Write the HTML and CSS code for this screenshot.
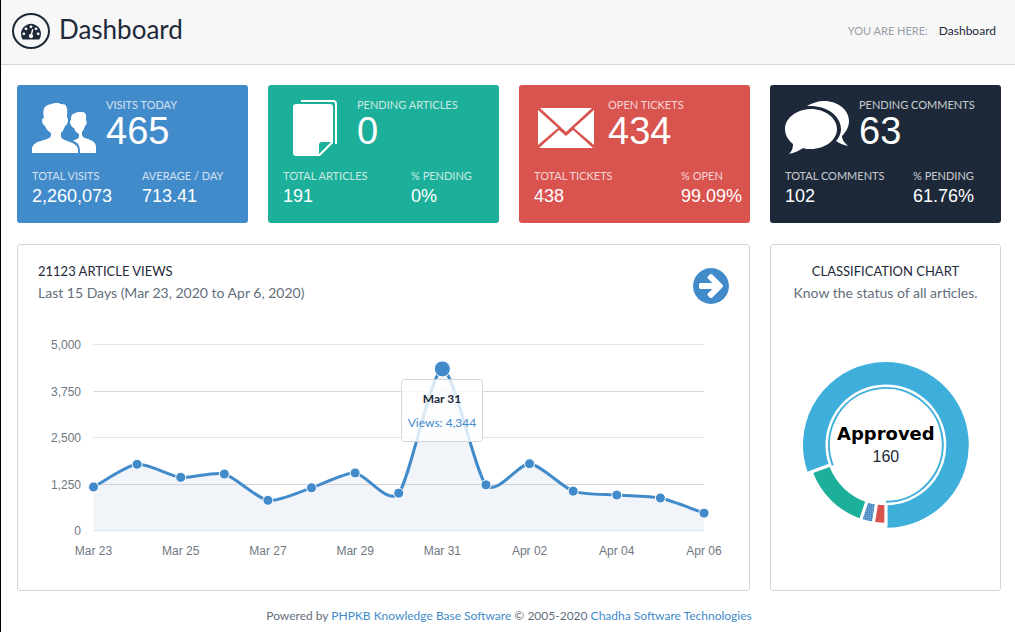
FILE: index.html
```html
<!DOCTYPE html>
<html lang="en">
<head>
  <meta charset="UTF-8" />
  <meta name="viewport" content="width=device-width, initial-scale=1.0" />
  <title>Dashboard</title>
  <link rel="stylesheet" href="styles.css">
</head>
<body>
  <header class="page-header">
    <h1>
      <span class="title-icon">
        <svg viewBox="0 0 1792 1792" aria-hidden="true"><path d="M384 1152q0-53-37.5-90.5t-90.5-37.5-90.5 37.5-37.5 90.5 37.5 90.5 90.5 37.5 90.5-37.5 37.5-90.5zm192-448q0-53-37.5-90.5t-90.5-37.5-90.5 37.5-37.5 90.5 37.5 90.5 90.5 37.5 90.5-37.5 37.5-90.5zm428 481l101-382q6-26-7.5-48.5t-38.5-29.5-48 6.5-30 39.5l-101 382q-60 5-107 43.5t-63 98.5q-20 77 20 146t117 89 146-20 89-117q16-60-6-117t-72-91zm660-33q0-53-37.5-90.5t-90.5-37.5-90.5 37.5-37.5 90.5 37.5 90.5 90.5 37.5 90.5-37.5 37.5-90.5zm-640-640q0-53-37.5-90.5t-90.5-37.5-90.5 37.5-37.5 90.5 37.5 90.5 90.5 37.5 90.5-37.5 37.5-90.5zm448 192q0-53-37.5-90.5t-90.5-37.5-90.5 37.5-37.5 90.5 37.5 90.5 90.5 37.5 90.5-37.5 37.5-90.5zm320 448q0 261-141 483-19 29-54 29h-1402q-35 0-54-29-141-221-141-483 0-182 71-348t191-286 286-191 348-71 348 71 286 191 191 286 71 348z"/></svg>
      </span>
      <span>Dashboard</span>
    </h1>
    <div class="breadcrumb">
      <span class="breadcrumb-label">You are here:</span>
      <span>Dashboard</span>
    </div>
  </header>

  <main class="dashboard">
    <section class="stat stat-visits">
      <div class="stat-main">
        <svg class="stat-icon" viewBox="0 0 64 60" aria-hidden="true">
          <path d="M0 55v-4c0-4 4-7 9-8 6-2 10-3 10-6v-2c-3-2-5-4-6-7-2-1-3-4-3-6 0-1 1-2 2-2-1-5-1-10 2-12 3-2 6-2 9-3h4c1 2 6 0 7 3 2 3 1 7 1 12 1 0 1 1 1 2 0 2-1 5-3 6-1 3-2 5-4 7v3c0 3 4 4 9 6s8 4 8 8v3z"/>
          <path d="M48 55c0-7-1-10-7-12 3-2 6-2 6-5v-2c-3-2-4-3-5-6-3-1-4-5-4-6 0-1 0-1 1-2 0-3 0-5 2-6 2-1 3-1 5-2h4c3 0 4 2 4 4v4c1 1 1 5-1 6-1 3-2 5-3 6v2c0 3 2 4 6 5 5 2 8 4 8 8v6z"/>
        </svg>
        <div>
          <h2>Visits Today</h2>
          <p class="stat-value">465</p>
        </div>
      </div>
      <dl class="stat-totals">
        <div><dt>Total Visits</dt><dd>2,260,073</dd></div>
        <div><dt>Average / Day</dt><dd>713.41</dd></div>
      </dl>
    </section>

    <section class="stat stat-articles">
      <div class="stat-main">
        <svg class="stat-icon" viewBox="0 0 64 60" aria-hidden="true">
          <path class="line" d="M18 3h32q3 0 3 3v40"/>
          <path fill-rule="evenodd" d="M13 6h34q3 0 3 3v36L37 58H13q-3 0-3-3V9q0-3 3-3zM36 56l12-12H39q-3 0-3 3z"/>
        </svg>
        <div>
          <h2>Pending Articles</h2>
          <p class="stat-value">0</p>
        </div>
      </div>
      <dl class="stat-totals">
        <div><dt>Total Articles</dt><dd>191</dd></div>
        <div><dt>% Pending</dt><dd>0%</dd></div>
      </dl>
    </section>

    <section class="stat stat-tickets">
      <div class="stat-main">
        <svg class="stat-icon" viewBox="0 0 64 60" aria-hidden="true">
          <path d="M6 10h52L32 34z"/>
          <path d="M4 12v35l20-17z"/>
          <path d="M60 12v35L40 30z"/>
          <path d="M5 50l20-18 7 6 7-6 20 18z"/>
        </svg>
        <div>
          <h2>Open Tickets</h2>
          <p class="stat-value">434</p>
        </div>
      </div>
      <dl class="stat-totals">
        <div><dt>Total Tickets</dt><dd>438</dd></div>
        <div><dt>% Open</dt><dd>99.09%</dd></div>
      </dl>
    </section>

    <section class="stat stat-comments">
      <div class="stat-main">
        <svg class="stat-icon" viewBox="0 0 64 60" aria-hidden="true">
          <path d="M26 11c14 0 26 9 26 20S40 51 26 51c-3 0-6 0-8-1-4 3-9 5-14 6 3-3 4-6 4-10-5-4-8-9-8-15 0-11 12-20 26-20z"/>
          <path d="M22 8c5-3 11-5 17-5 14 0 25 9 25 20 0 6-3 11-7 15 0 4 3 7 6 10-5-1-9-3-12-5 3-3 5-8 5-12C56 18 42 7 22 8z"/>
        </svg>
        <div>
          <h2>Pending Comments</h2>
          <p class="stat-value">63</p>
        </div>
      </div>
      <dl class="stat-totals">
        <div><dt>Total Comments</dt><dd>102</dd></div>
        <div><dt>% Pending</dt><dd>61.76%</dd></div>
      </dl>
    </section>

    <section class="panel panel-views">
      <div class="panel-head">
        <div>
          <h3>21123 Article Views</h3>
          <p>Last 15 Days (Mar 23, 2020 to Apr 6, 2020)</p>
        </div>
        <a class="panel-more" href="#" aria-label="View report">
          <svg viewBox="128 128 1536 1536" aria-hidden="true"><path d="M1413 896q0-27-18-45l-91-91-362-362q-18-18-45-18t-45 18l-91 91q-18 18-18 45t18 45l189 189h-502q-26 0-45 19t-19 45v128q0 26 19 45t45 19h502l-189 189q-19 19-19 45t19 45l91 91q18 18 45 18t45-18l362-362 91-91q18-18 18-45zm251 0q0 209-103 385.5t-279.5 279.5-385.5 103-385.5-103-279.5-279.5-103-385.5 103-385.5 279.5-279.5 385.5-103 385.5 103 279.5 279.5 103 385.5z"/></svg>
        </a>
      </div>
      <svg class="views-chart" id="viewsChart" viewBox="0 0 731 240" role="img" aria-label="Article views per day"></svg>
    </section>

    <section class="panel panel-status">
      <h3>Classification Chart</h3>
      <p>Know the status of all articles.</p>
      <svg class="status-chart" id="statusChart" viewBox="0 0 172 172" role="img" aria-label="Articles by status">
        <defs>
          <pattern id="dots" width="2" height="2" patternUnits="userSpaceOnUse">
            <rect width="2" height="2" fill="#428bca"/>
            <rect width="1" height="1" fill="#9fb4cf"/>
          </pattern>
        </defs>
      </svg>
    </section>
  </main>

  <footer class="page-footer">
    Powered by <a href="#">PHPKB Knowledge Base Software</a> © 2005-2020 <a href="#">Chadha Software Technologies</a>
  </footer>

  <script src="script.js"></script>
</body>
</html>
```
FILE: styles.css
```css
:root {
  --blue: #428bca;
  --green: #1caf9a;
  --red: #d9534f;
  --dark: #1d2939;
  --muted: #636e7b;
  --border: #d3d7db;
}
* {
  box-sizing: border-box;
}
body {
  font-family: Lato, sans-serif;
  font-size: 12px;
  line-height: 20px;
  margin: 0;
  min-height: 100vh;
  color: var(--muted);
  background: #fff;
  border-left: 1px solid #000;
}
h1, h2, h3, p, dl, dd {
  margin: 0;
  font-weight: normal;
}
a {
  color: var(--blue);
  text-decoration: none;
}
svg {
  display: block;
}
.page-header {
  display: flex;
  align-items: center;
  justify-content: space-between;
  height: 65px;
  padding: 0 19px 2px 11px;
  background: #f7f7f7;
  border-bottom: 1px solid var(--border);
}
.page-header h1 {
  display: flex;
  align-items: flex-start;
  gap: 9px;
  font-size: 26px;
  line-height: 32px;
  color: var(--dark);
}
.title-icon {
  display: grid;
  place-items: center;
  width: 38px;
  height: 36px;
  border: 2px solid var(--dark);
  border-radius: 50%;
}
.title-icon svg {
  width: 20px;
  height: 20px;
  fill: var(--dark);
}
.breadcrumb {
  display: flex;
  gap: 11px;
  color: var(--dark);
}
.breadcrumb-label {
  font-size: 11px;
  text-transform: uppercase;
  color: #999fa7;
}
.dashboard {
  display: grid;
  grid-template-columns: repeat(4, 1fr);
  gap: 21px 20px;
  padding: 20px 14px 15px 16px;
}

/* stat cards */
.stat {
  padding: 13px 0 14px 15px;
  border-radius: 3px;
  color: #fff;
}
.stat-visits { background: var(--blue); }
.stat-articles { background: var(--green); }
.stat-tickets { background: var(--red); }
.stat-comments { background: var(--dark); }
.stat-main {
  display: flex;
  gap: 10px;
  height: 70px;
}
.stat-icon {
  width: 64px;
  height: 60px;
  fill: #fff;
}
.stat-icon .line {
  fill: none;
  stroke: #fff;
  stroke-width: 2;
}
.stat h2,
.stat dt {
  font-size: 11px;
  line-height: 15px;
  text-transform: uppercase;
  white-space: nowrap;
  opacity: 0.75;
}
.stat h2 {
  line-height: 13px;
}
.stat-value {
  font-family: "Liberation Sans", Arial, sans-serif;
  font-size: 38px;
  line-height: 40px;
}
.stat-totals {
  display: grid;
  grid-template-columns: 110px 1fr;
}
.stat-articles .stat-totals,
.stat-comments .stat-totals {
  grid-template-columns: 128px 1fr;
}
.stat-tickets .stat-totals {
  grid-template-columns: 147px 1fr;
}
.stat dd {
  font-family: "Liberation Sans", Arial, sans-serif;
  font-size: 18px;
  line-height: 26px;
}

/* panels */
.panel {
  border: 1px solid var(--border);
  border-radius: 3px;
  padding-top: 15px;
}
.panel h3 {
  font-size: 13px;
  line-height: 22px;
  text-transform: uppercase;
  color: var(--dark);
}
.panel p {
  font-size: 14px;
  line-height: 22px;
}
.panel-views {
  grid-column: span 3;
  padding-bottom: 26px;
}
.panel-head {
  display: flex;
  justify-content: space-between;
  align-items: flex-start;
  height: 64px;
  padding: 0 20px;
}
.panel-more {
  padding-top: 8px;
}
.panel-more svg {
  width: 36px;
  height: 36px;
  fill: var(--blue);
}
.panel-status {
  text-align: center;
}
.status-chart {
  width: 75%;
  margin: 55px auto 0;
}
.views-chart {
  width: 100%;
}
.views-chart text {
  font-family: "Liberation Sans", Arial, sans-serif;
  font-size: 12px;
  fill: #70777f;
}
.grid-line { stroke: #d3d5d8; }
.grid-line.light { stroke: #dbe7f0; }
.area { fill: #f1f5f9; }
.series {
  fill: none;
  stroke: var(--blue);
  stroke-width: 3;
}
.point {
  fill: var(--blue);
  stroke: #fff;
}
.views-chart .tip-date,
.views-chart .tip-value {
  font-family: Lato, sans-serif;
  text-anchor: middle;
}
.views-chart .tip-date { fill: var(--dark); font-weight: bold; }
.views-chart .tip-value { fill: var(--blue); }
.tip-box {
  fill: #fff;
  fill-opacity: 0.8;
  stroke: var(--border);
}
.slice {
  stroke: #fff;
  stroke-width: 3;
}
.ring {
  fill: none;
  stroke: #3eaedb;
  stroke-width: 2;
}
.donut-label {
  font-family: "DejaVu Sans", sans-serif;
  font-size: 18px;
  font-weight: bold;
  text-anchor: middle;
}
.donut-value {
  font-family: "Liberation Sans", Arial, sans-serif;
  font-size: 16px;
  fill: var(--dark);
  text-anchor: middle;
}
.page-footer {
  padding: 0 14px 0 16px;
  text-align: center;
}
@media (max-width: 800px) {
  .dashboard {
    grid-template-columns: repeat(2, 1fr);
  }
  .panel-views,
  .panel-status {
    grid-column: span 2;
    padding-bottom: 20px;
  }
}
```
FILE: script.js
```js
const views = [1171, 1779, 1429, 1518, 811, 1147, 1547, 1004, 4344, 1227, 1795, 1058, 953, 873, 467];
const days = ['Mar 23', 'Mar 25', 'Mar 27', 'Mar 29', 'Mar 31', 'Apr 02', 'Apr 04', 'Apr 06'];
const active = 8;

function add(parent, tag, attrs, text) {
  const el = document.createElementNS('http://www.w3.org/2000/svg', tag);
  for (const key in attrs) el.setAttribute(key, attrs[key]);
  if (text) el.textContent = text;
  parent.appendChild(el);
  return el;
}

function drawViews() {
  const svg = document.getElementById('viewsChart');
  const left = 75.5, right = 686, top = 20.5, bottom = 206.5;
  const pts = views.map((v, i) => ({
    x: left + i * (right - left) / (views.length - 1),
    y: bottom - v / 5000 * (bottom - top)
  }));

  // slope at each point, taken from its neighbours
  const slopes = pts.map((p, i) => {
    const a = pts[i - 1] || p;
    const b = pts[i + 1] || p;
    return (b.y - a.y) / (b.x - a.x);
  });
  let line = `M${pts[0].x},${pts[0].y}`;
  for (let i = 1; i < pts.length; i++) {
    const a = pts[i - 1], b = pts[i];
    const ix = (b.x - a.x) / 4;
    line += `C${a.x + ix},${a.y + ix * slopes[i - 1]},${b.x - ix},${b.y - ix * slopes[i]},${b.x},${b.y}`;
  }

  add(svg, 'path', { class: 'area', d: `${line}L${right},${bottom}L${left},${bottom}Z` });
  [5000, 3750, 2500, 1250, 0].forEach((value, i) => {
    const y = Math.floor(top + i * (bottom - top) / 4) + 0.5;
    add(svg, 'line', { class: i % 2 ? 'grid-line' : 'grid-line light', x1: left, x2: right, y1: y, y2: y });
    add(svg, 'text', { x: 63, y: y + 4, 'text-anchor': 'end' }, value.toLocaleString('en-US'));
  });
  days.forEach((day, i) => {
    add(svg, 'text', { x: pts[i * 2].x, y: 231, 'text-anchor': 'middle' }, day);
  });
  add(svg, 'path', { class: 'series', d: line });
  pts.forEach((p, i) => {
    add(svg, 'circle', { class: 'point', cx: p.x, cy: p.y, r: i === active ? 8 : 5 });
  });

  // tooltip
  const x = Math.round(pts[active].x);
  add(svg, 'rect', { class: 'tip-box', x: x - 40.5, y: 55.5, width: 81, height: 62, rx: 3 });
  add(svg, 'text', { class: 'tip-date', x: x, y: 79 }, 'Mar 31');
  add(svg, 'text', { class: 'tip-value', x: x, y: 103 }, 'Views: 4,344');
}

function drawStatus() {
  const svg = document.getElementById('statusChart');
  const c = 86;
  const at = (r, deg) => {
    const rad = deg * Math.PI / 180;
    return `${c + r * Math.cos(rad)},${c + r * Math.sin(rad)}`;
  };
  const slices = [
    { from: 160, to: 450, color: '#3eaedb', r: 84.5 },
    { from: 108.5, to: 160, color: '#1caf9a', r: 79.5 },
    { from: 99, to: 108.5, color: 'url(#dots)', r: 79.5 },
    { from: 90, to: 99, color: '#d9534f', r: 79.5 }
  ];
  slices.forEach(s => {
    const big = s.to - s.from > 180 ? 1 : 0;
    add(svg, 'path', {
      class: 'slice',
      fill: s.color,
      d: `M${at(s.r, s.from)}A${s.r},${s.r},0,${big},1,${at(s.r, s.to)}L${at(59, s.to)}A59,59,0,${big},0,${at(59, s.from)}Z`
    });
  });
  add(svg, 'path', { class: 'ring', d: `M${at(57, 159)}A57,57,0,1,1,${at(57, 90)}` });
  add(svg, 'text', { class: 'donut-label', x: c, y: 81 }, 'Approved');
  add(svg, 'text', { class: 'donut-value', x: c, y: 103 }, '160');
}

drawViews();
drawStatus();
```
